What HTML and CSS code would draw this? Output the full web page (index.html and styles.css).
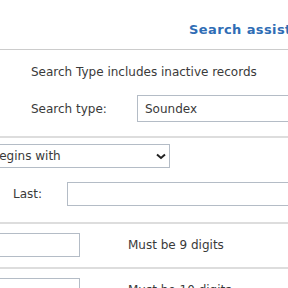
FILE: index.html
```html
<!DOCTYPE html>
<html lang="en">
<head>
  <meta charset="UTF-8">
  <title>Member Search</title>
  <link rel="stylesheet" href="styles.css">
</head>
<body>
  <div class="page">
    <header class="top">
      <a class="assist" href="#">Search assistance</a>
    </header>

    <section class="block">
      <p class="note">Search Type includes inactive records</p>
      <div class="field">
        <label class="lbl" for="searchType">Search type:</label>
        <select id="searchType" class="sel wide">
          <option>Soundex</option>
          <option>Exact</option>
        </select>
      </div>
    </section>

    <section class="block name">
      <div class="sel-wrap">
        <select class="sel match">
          <option>Begins with</option>
          <option>Exact</option>
        </select>
        <svg class="chev" width="10" height="7" viewBox="0 0 10 7">
          <path d="M1 1.5 L5 5 L9 1.5" fill="none" stroke="#222" stroke-width="2"/>
        </svg>
      </div>
      <div class="field last">
        <label class="lbl" for="lastName">Last:</label>
        <input id="lastName" type="text" class="txt wide">
      </div>
    </section>

    <section class="block row">
      <input type="text" class="txt short">
      <span class="hint">Must be 9 digits</span>
    </section>

    <section class="block row">
      <input type="text" class="txt short">
      <span class="hint">Must be 10 digits</span>
    </section>
  </div>
</body>
</html>
```

FILE: styles.css
```css
body {
  margin: 0;
  font-family: "DejaVu Sans", Verdana, sans-serif;
  font-size: 12px;
  color: #3a3a3a;
  background: #fff;
  overflow: hidden;
}
.page {
  width: 420px;
  margin-left: -17px;
}
.top {
  height: 50px;
  border-bottom: 1px solid #ccc;
  padding-left: 206px;
  display: flex;
  align-items: center;
  padding-top: 10px;
  box-sizing: border-box;
}
.assist {
  color: #2f6db5;
  font-weight: bold;
  font-size: 13px;
  letter-spacing: 0.4px;
  text-decoration: none;
  white-space: nowrap;
}
.block {
  border-bottom: 2px solid #ddd;
}
.note {
  margin: 0;
  padding: 15px 0 0 48px;
  white-space: nowrap;
}
.field {
  display: flex;
  align-items: center;
  padding: 16px 0 14px 48px;
}
.lbl {
  width: 106px;
  white-space: nowrap;
}
.sel,
.txt {
  font-family: inherit;
  font-size: 12px;
  color: #3a3a3a;
  background: #fff;
  border: 1px solid #b4bcc6;
  border-radius: 0;
  box-sizing: border-box;
}
.sel {
  appearance: none;
  padding: 0 7px;
}
.wide {
  width: 260px;
  height: 27px;
}
.name {
  padding-top: 6px;
}
.sel-wrap {
  position: relative;
  width: 187px;
}
.match {
  width: 187px;
  height: 24px;
}
.chev {
  position: absolute;
  right: 4px;
  top: 9px;
}
.last {
  padding: 14px 0 16px 30px;
}
.last .lbl {
  width: 54px;
}
.last .txt {
  height: 24px;
}
.row {
  display: flex;
  align-items: center;
  padding: 9px 0 10px;
}
.short {
  width: 97px;
  height: 24px;
}
.hint {
  margin-left: 48px;
  white-space: nowrap;
}
```
